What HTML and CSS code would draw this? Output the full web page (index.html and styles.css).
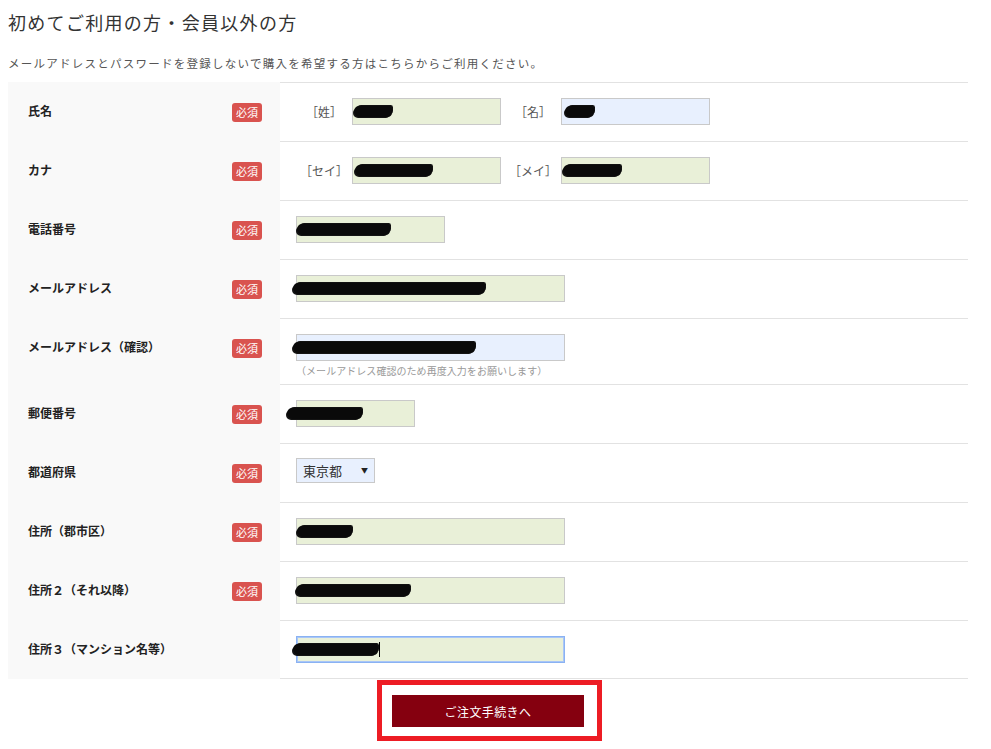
FILE: index.html
```html
<!DOCTYPE html>
<html lang="ja">
<head>
<meta charset="utf-8">
<title>初めてご利用の方・会員以外の方</title>
<link rel="stylesheet" href="styles.css">
</head>
<body>
<div class="page">
  <h1 class="title">初めてご利用の方・会員以外の方</h1>
  <p class="lead">メールアドレスとパスワードを登録しないで購入を希望する方はこちらからご利用ください。</p>

  <div class="form">
    <div class="row">
      <div class="th"><span class="lbl">氏名</span><span class="req">必須</span></div>
      <div class="td">
        <span class="sub">［姓］</span>
        <div class="field w-s"><span class="blob" style="width:38px;margin-left:1px"></span></div>
        <span class="sub sub-2">［名］</span>
        <div class="field w-s auto"><span class="blob" style="width:29px;margin-left:3px"></span></div>
      </div>
    </div>

    <div class="row">
      <div class="th"><span class="lbl">カナ</span><span class="req">必須</span></div>
      <div class="td">
        <span class="sub">［セイ］</span>
        <div class="field w-s"><span class="blob" style="width:77px;margin-left:2px"></span></div>
        <span class="sub sub-2">［メイ］</span>
        <div class="field w-s"><span class="blob" style="width:58px;margin-left:1px"></span></div>
      </div>
    </div>

    <div class="row">
      <div class="th"><span class="lbl">電話番号</span><span class="req">必須</span></div>
      <div class="td">
        <div class="field w-s"><span class="blob" style="width:93px;margin-left:0px"></span></div>
      </div>
    </div>

    <div class="row">
      <div class="th"><span class="lbl">メールアドレス</span><span class="req">必須</span></div>
      <div class="td">
        <div class="field w-l"><span class="blob" style="width:192px;margin-left:-4px"></span></div>
      </div>
    </div>

    <div class="row">
      <div class="th"><span class="lbl">メールアドレス（確認）</span><span class="req">必須</span></div>
      <div class="td stack">
        <div class="field w-l auto"><span class="blob" style="width:182px;margin-left:-4px"></span></div>
        <p class="note">（メールアドレス確認のため再度入力をお願いします）</p>
      </div>
    </div>

    <div class="row">
      <div class="th"><span class="lbl">郵便番号</span><span class="req">必須</span></div>
      <div class="td">
        <div class="field w-m"><span class="blob" style="width:75px;margin-left:-10px"></span></div>
      </div>
    </div>

    <div class="row">
      <div class="th"><span class="lbl">都道府県</span><span class="req">必須</span></div>
      <div class="td">
        <div class="select">東京都</div>
      </div>
    </div>

    <div class="row">
      <div class="th"><span class="lbl">住所（郡市区）</span><span class="req">必須</span></div>
      <div class="td">
        <div class="field w-l"><span class="blob" style="width:55px;margin-left:0px"></span></div>
      </div>
    </div>

    <div class="row">
      <div class="th"><span class="lbl">住所２（それ以降）</span><span class="req">必須</span></div>
      <div class="td">
        <div class="field w-l"><span class="blob" style="width:114px;margin-left:-1px"></span></div>
      </div>
    </div>

    <div class="row last">
      <div class="th"><span class="lbl">住所３（マンション名等）</span></div>
      <div class="td">
        <div class="field w-l focus"><span class="blob" style="width:85px;margin-left:-4px"></span><span class="caret"></span></div>
      </div>
    </div>
  </div>

  <div class="actions">
    <div class="highlight">
      <button class="submit" type="button">ご注文手続きへ</button>
    </div>
  </div>
</div>
</body>
</html>
```

FILE: styles.css
```css
* { box-sizing: border-box; }

html, body {
  margin: 0;
  padding: 0;
  background: #ffffff;
}

body {
  font-family: "Noto Sans CJK JP", "Noto Sans", "Liberation Sans", sans-serif;
  color: #333333;
}

.page {
  padding: 8px;
  width: 976px;
}

.title {
  margin: 0;
  font-size: 18px;
  font-weight: 400;
  line-height: 28px;
  letter-spacing: 1.3px;
  color: #333333;
}

.lead {
  margin: 18px 0 10px;
  font-size: 11.5px;
  line-height: 18px;
  letter-spacing: 1.25px;
  color: #555555;
}

.form {
  width: 960px;
}

.row {
  display: grid;
  grid-template-columns: 272px 1fr;
}

.th {
  background: #f9f9f9;
  display: flex;
  justify-content: space-between;
  align-items: flex-start;
  padding: 21px 18px 0 20px;
}

.lbl {
  font-size: 12px;
  font-weight: 700;
  line-height: 16px;
  color: #222222;
}

.req {
  width: 30px;
  height: 19px;
  border-radius: 3px;
  background: #d9534f;
  color: #ffffff;
  font-size: 11px;
  line-height: 19px;
  text-align: center;
}

.td {
  border-top: 1px solid #e2e2e2;
  padding: 15px 16px 16px;
  display: flex;
  align-items: center;
}

.row.last .td {
  border-bottom: 1px solid #e2e2e2;
  padding-bottom: 15px;
}

.td.stack {
  flex-direction: column;
  align-items: flex-start;
  padding-bottom: 6px;
}

.sub {
  width: 56px;
  text-align: center;
  font-size: 12px;
  color: #555555;
  line-height: 27px;
}

.sub-2 {
  margin-left: 4px;
}

.field {
  height: 27px;
  border: 1px solid #c9c9c9;
  background: #e9f0d8;
  display: flex;
  align-items: center;
  position: relative;
}

.field.auto {
  background: #e8f0fe;
}

.field.focus {
  border-color: #8ab2f2;
  box-shadow: inset 0 0 0 1px #a9c6f7;
}

.w-s { width: 149px; }
.w-m { width: 119px; }
.w-l { width: 269px; }

.blob {
  display: block;
  height: 11px;
  border-radius: 6px 4px 5px 7px;
  background: #0a0a0a;
  box-shadow: 2px -2px 0 -1px #111111, -2px 2px 0 -1px #141414;
}

.caret {
  display: block;
  width: 1px;
  height: 15px;
  background: #000000;
  margin-left: 1px;
}

.note {
  margin: 3px 0 0;
  font-size: 10px;
  line-height: 14px;
  color: #999999;
  letter-spacing: 0.05px;
}

.select {
  position: relative;
  width: 79px;
  height: 25px;
  margin: -1px 0 3px;
  border: 1px solid #c9c9c9;
  background: #e8f0fe;
  font-size: 13px;
  line-height: 23px;
  padding-left: 6px;
  color: #333333;
}

.select::after {
  content: "▼";
  position: absolute;
  right: 6px;
  top: 0;
  font-size: 7px;
  line-height: 23px;
  color: #222222;
}

.actions {
  width: 960px;
  display: flex;
  justify-content: center;
  margin-top: 1px;
}

.highlight {
  border: 5px solid #ed1c24;
  padding: 10px 13px 9px 10px;
  margin-left: 3px;
}

.submit {
  display: block;
  width: 192px;
  height: 32px;
  border: 0;
  background: #85000f;
  color: #ffffff;
  font-family: "Noto Sans CJK JP", "Noto Sans", sans-serif;
  font-size: 12px;
  letter-spacing: 0.4px;
  cursor: pointer;
}
```
